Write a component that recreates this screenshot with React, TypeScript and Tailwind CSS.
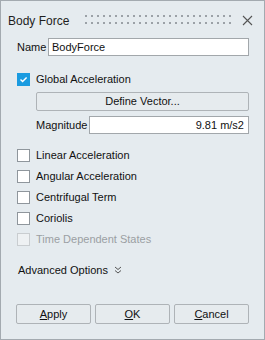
import React from "react";

function Check({ checked, disabled }: { checked?: boolean; disabled?: boolean }) {
  if (checked) {
    return (
      <span className="flex h-[13px] w-[13px] items-center justify-center bg-[#1a9be0]">
        <svg width="9" height="9" viewBox="0 0 9 9">
          <path d="M1.5 4.5 L3.6 6.6 L7.6 2.4" fill="none" stroke="white" strokeWidth="1.4" />
        </svg>
      </span>
    );
  }
  return (
    <span
      className={
        disabled
          ? "h-[13px] w-[13px] border border-[#c9cdd0] bg-[#eef1f3]"
          : "h-[13px] w-[13px] border border-[#8f969c] bg-white"
      }
    />
  );
}

function CheckRow({ label, checked, disabled }: { label: string; checked?: boolean; disabled?: boolean }) {
  return (
    <div className="flex h-[21px] items-center gap-[6px] pl-[16px]">
      <Check checked={checked} disabled={disabled} />
      <span className={disabled ? "text-[#9b9fa3]" : "text-[#111]"}>{label}</span>
    </div>
  );
}

function Btn({ children }: { children: React.ReactNode }) {
  return (
    <button className="flex h-[20px] w-[75px] items-center justify-center rounded-[2px] border border-[#aeb3b7] bg-[#e6ebee] text-[#111]">
      {children}
    </button>
  );
}

export default function App() {
  return (
    <div
      className="flex h-[340px] w-[265px] flex-col border border-[#a3aab0] bg-[#e5ebef] text-[11px] text-[#111]"
      style={{ fontFamily: '"Segoe UI", "Liberation Sans", sans-serif' }}
    >
      <div className="flex h-[37px] items-center pl-[7px] pr-[11px] pt-[2px]">
        <span className="text-[12px] text-[#1e1e1e]">Body Force</span>
        <svg className="ml-[16px] mt-[-2px]" width="146" height="10" viewBox="0 0 146 10">
          <defs>
            <pattern id="dots" x="0" y="0" width="6" height="7" patternUnits="userSpaceOnUse">
              <rect x="0" y="0" width="2" height="2" fill="#9ba1a7" />
            </pattern>
          </defs>
          <rect x="0" y="0" width="146" height="10" fill="url(#dots)" />
        </svg>
        <div className="flex-1" />
        <svg width="11" height="11" viewBox="0 0 11 11">
          <path d="M1 1 L10 10 M10 1 L1 10" stroke="#555" strokeWidth="1.1" />
        </svg>
      </div>

      <div className="flex items-center pl-[16px] pr-[15px]">
        <span className="w-[31px]">Name</span>
        <div className="flex h-[18px] flex-1 items-center border border-[#a2a7ab] bg-white px-[3px]">BodyForce</div>
      </div>

      <div className="mt-[13px]">
        <CheckRow label="Global Acceleration" checked />
      </div>

      <div className="flex flex-col gap-[5px] pl-[35px] pr-[15px] pt-[2px]">
        <button className="flex h-[19px] items-center justify-center rounded-[2px] border border-[#aeb3b7] bg-[#e6ebee]">
          Define Vector...
        </button>
        <div className="flex items-center">
          <span className="w-[53px]">Magnitude</span>
          <div className="flex h-[18px] flex-1 items-center justify-end border border-[#a2a7ab] bg-white px-[4px]">
            9.81 m/s2
          </div>
        </div>
      </div>

      <div className="mt-[11px] flex flex-col">
        <CheckRow label="Linear Acceleration" />
        <CheckRow label="Angular Acceleration" />
        <CheckRow label="Centrifugal Term" />
        <CheckRow label="Coriolis" />
        <CheckRow label="Time Dependent States" disabled />
      </div>

      <div className="mt-[10px] flex h-[20px] items-center gap-[6px] pl-[17px]">
        <span>Advanced Options</span>
        <svg width="8" height="8" viewBox="0 0 8 8">
          <path d="M1 1 L4 3.5 L7 1 M1 4.5 L4 7 L7 4.5" fill="none" stroke="#555" strokeWidth="1" />
        </svg>
      </div>

      <div className="flex-1" />

      <div className="mb-[15px] flex gap-[4px] pl-[15px]">
        <Btn>
          <span className="underline">A</span>pply
        </Btn>
        <Btn>
          <span className="underline">O</span>K
        </Btn>
        <Btn>
          <span className="underline">C</span>ancel
        </Btn>
      </div>
    </div>
  );
}
